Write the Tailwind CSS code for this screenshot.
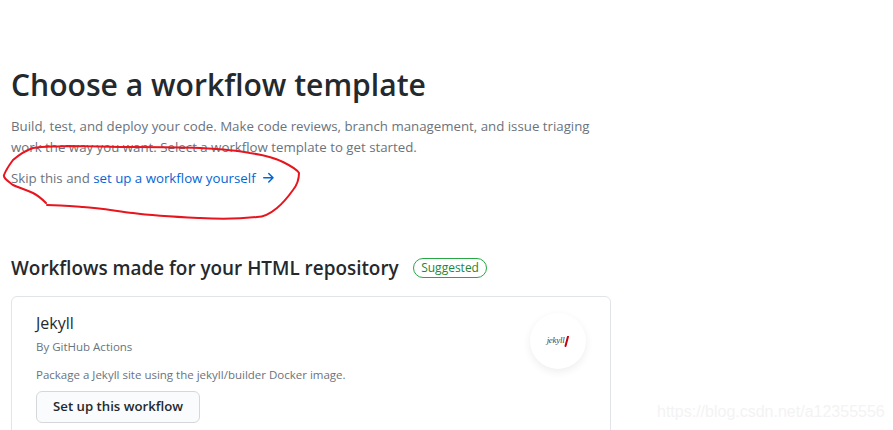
<!DOCTYPE html>
<html lang="en">
<head>
  <meta charset="UTF-8" />
  <title>Choose a workflow template</title>
  <script src="https://cdn.jsdelivr.net/npm/@tailwindcss/browser@4"></script>
</head>
<body class="bg-white font-['Open_Sans',sans-serif] overflow-hidden">
  <div class="relative w-[893px] h-[430px] overflow-hidden">
    <main class="w-[600px] ml-[11px] pt-[65px]">
      <h1 class="text-[30.1px] leading-[40px] font-semibold text-[#24292e]">Choose a workflow template</h1>
      <p class="mt-[11px] text-[13.27px] leading-[20.5px] text-[#6a737d]">Build, test, and deploy your code. Make code reviews, branch management, and issue triaging work the way you want. Select a workflow template to get started.</p>
      <p class="mt-[11px] text-[13.27px] leading-[20px] text-[#6a737d]">Skip this and <a href="#" class="text-[#0366d6]">set up a workflow yourself</a>
        <svg class="inline-block ml-[1px] align-[-3px]" width="16" height="16" viewBox="0 0 16 16" fill="#0366d6"><path d="M8.22 2.97a.75.75 0 0 1 1.06 0l4.25 4.25a.75.75 0 0 1 0 1.06l-4.25 4.25a.75.75 0 0 1-1.06-1.06l2.97-2.97H3.75a.75.75 0 0 1 0-1.5h7.44L8.22 4.03a.75.75 0 0 1 0-1.06z"/></svg>
      </p>

      <div class="mt-[66px] flex items-center gap-[14px]">
        <h2 class="text-[18.9px] leading-[28px] font-semibold text-[#24292e]">Workflows made for your HTML repository</h2>
        <span class="h-[20px] px-[7.5px] flex items-center rounded-full border border-[#28a745] text-[12px] font-medium text-[#22863a]">Suggested</span>
      </div>

      <section class="mt-[14px] ml-0 w-[600px] h-[200px] border border-[#e1e4e8] rounded-[6px] pt-[15px] pl-[24px] pr-[22px] flex justify-between items-start">
        <div>
          <h3 class="text-[16px] leading-[22px] font-medium text-[#24292e]">Jekyll</h3>
          <p class="mt-[4px] text-[11.5px] leading-[18px] text-[#6a737d]">By GitHub Actions</p>
          <p class="mt-[10px] text-[11.5px] leading-[18px] text-[#6a737d]">Package a Jekyll site using the jekyll/builder Docker image.</p>
          <button class="mt-[7px] h-[32px] w-[164px] rounded-[6px] border border-[#d5d8da] bg-[#fafbfc] text-[13.2px] font-semibold text-[#24292e]">Set up this workflow</button>
        </div>
        <div class="mt-[1px] mr-[2px] w-[56px] h-[56px] rounded-full bg-white shadow-[0_3px_8px_rgba(0,0,0,0.07)] flex items-center justify-center">
          <span class="font-['Liberation_Serif',serif] italic text-[9px] tracking-[-0.3px] text-[#444]">jekyll</span>
          <svg width="5" height="11" viewBox="0 0 5 11"><path d="M4 0.5 L1.5 10" stroke="#c8000f" stroke-width="2" stroke-linecap="round"/></svg>
        </div>
      </section>
    </main>

    <!-- hand drawn red circle on top of the screenshot -->
    <svg class="absolute inset-0 pointer-events-none" width="893" height="430" fill="none">
      <path d="M46 203 C42 199 37 195 33 193 C24 189 17 187 13 185 C8 181 3 178 4 175 C6 170 10 164 13 160 C20 154 27 150 33 148 C44 146 55 147 67 146 C90 146 110 147 133 147 C156 147 178 147 200 148 C218 149 235 150 250 153 C264 155 275 158 283 162 C291 166 297 169 299 173 C299 179 297 185 293 190 C288 197 283 203 277 208 C271 213 264 217 257 217 C238 219 219 219 200 218 C178 217 155 216 133 213 C116 211 100 208 83 207 C70 206 58 205 47 205" stroke="#e8141e" stroke-width="2" stroke-linecap="round"/>
    </svg>

    <span class="absolute left-[657px] top-[401px] font-['Liberation_Sans',sans-serif] text-[16px] leading-[22px] text-[#f3f3f3]">https://blog.csdn.net/a12355556</span>
  </div>
</body>
</html>
